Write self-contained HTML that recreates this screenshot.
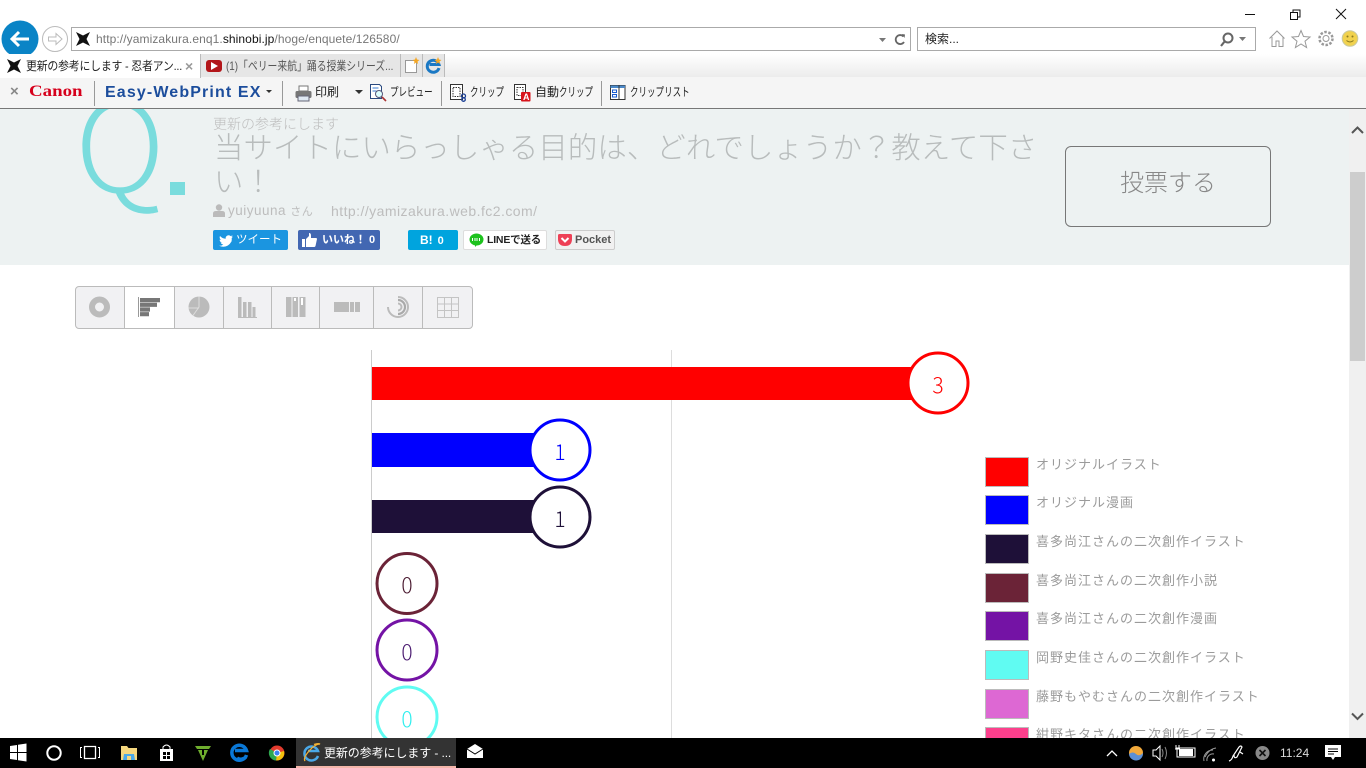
<!DOCTYPE html>
<html lang="ja"><head><meta charset="utf-8"><title>更新の参考にします</title>
<style>
html,body{margin:0;padding:0;width:1366px;height:768px;overflow:hidden;background:#fff}
body{position:relative;font-family:"Liberation Sans","Noto Sans CJK JP",sans-serif;}
.a{position:absolute;white-space:nowrap;margin:0;padding:0}
svg{position:absolute;overflow:visible}
.tb{font-size:12px;color:#222;line-height:16px;top:84px;transform-origin:left center}
.nr{transform:scaleX(.71)}
.dv{position:absolute;top:81px;width:1px;height:25px;background:#999}
.sw{position:absolute;left:985px;width:42px;height:28px;border:1px solid #bbb}
.lg{position:absolute;left:1036px;font-size:13px;letter-spacing:1px;line-height:16px;color:#9b9b9b;white-space:nowrap}
.cell{position:absolute;top:287px;height:41px;border-right:1px solid #bbb}
.num{position:absolute;width:60px;text-align:center;font-family:"Noto Sans CJK JP",sans-serif;font-size:21px;line-height:24px;font-weight:300}
.sh{position:absolute;top:230px;height:20px;border-radius:2px;font-size:11px;font-weight:bold;line-height:20px;white-space:nowrap;box-sizing:border-box}
</style></head><body>

<!-- chrome -->
<div class="a" style="left:0;top:54px;width:1366px;height:23px;background:linear-gradient(#fff,#ececec)"></div>
<div class="a" style="left:0;top:77px;width:1366px;height:31px;background:#f5f5f5"></div>
<div class="a" style="left:0;top:108px;width:1366px;height:1px;background:#777"></div>

<!-- window buttons -->
<svg style="left:0;top:0" width="1366" height="54" fill="none">
<path d="M1245 14.500h10" stroke="#111"/>
<path d="M1290.500 12.500h7v7h-7zM1293 12.500v-2.500h7v7h-2.500" stroke="#111"/>
<path d="M1336 9l10 10M1346 9l-10 10" stroke="#111"/>
<circle cx="20" cy="39" r="18.500" fill="#0a84c6"/>
<path d="M29 39H12M19 32l-7 7 7 7" stroke="#fff" stroke-width="3"/>
<circle cx="55" cy="39" r="12.500" fill="#fff" stroke="#bbb"/>
<path d="M48.500 37h7.500v-3.500l6 5.500-6 5.500V41h-7.500z" stroke="#bbb"/>
</svg>

<div class="a" style="left:71px;top:27px;width:838px;height:22px;border:1px solid #aaa;background:#fff"></div>
<svg style="left:76px;top:32px" width="15" height="15"><path d="M0 0L7 3.500 14 0 10.500 7 14 14 7 10.500 0 14 3.500 7Z" fill="#111"/></svg>
<div class="a" style="left:96px;top:31px;font-size:12px;line-height:16px;color:#777;letter-spacing:.09px">http://yamizakura.enq1.<span style="color:#111">shinobi.jp</span>/hoge/enquete/126580/</div>
<svg style="left:878px;top:33px" width="30" height="14" fill="none"><path d="M1 5h7l-3.500 4z" fill="#777"/><path d="M25.500 3.500A4.500 4.500 0 1 0 26 9" stroke="#666" stroke-width="1.800"/><path d="M24 1l3 .5-.5 3.500z" fill="#666"/></svg>

<div class="a" style="left:917px;top:27px;width:337px;height:22px;border:1px solid #aaa;background:#fff"></div>
<div class="a" style="left:925px;top:31px;font-size:12px;line-height:16px;color:#222">検索...</div>
<svg style="left:1219px;top:31px" width="30" height="16" fill="none"><circle cx="9" cy="7" r="4.500" stroke="#666" stroke-width="2"/><path d="M6 10l-4 5" stroke="#666" stroke-width="2.200"/><path d="M20 6h7l-3.500 4z" fill="#777"/></svg>

<!-- right icons -->
<svg style="left:1268px;top:29px" width="92" height="20" fill="none" stroke="#999">
<path d="M1.500 9.500L9 2l7.500 7.500M4 8v9.500h4v-5.500h3v5.500h4V8"/>
<path d="M33 1.500l2.500 6 6.500.5-5 4.200 1.600 6.300-5.600-3.500-5.600 3.500 1.600-6.300-5-4.200 6.500-.5z"/>
<circle cx="58" cy="9.500" r="3"/><circle cx="58" cy="9.500" r="6.500" stroke-width="2.500" stroke-dasharray="2.500 1.600"/>
<circle cx="82" cy="9.500" r="7.800" fill="#f1d24e" stroke="#c9c9a0"/>
<circle cx="79.500" cy="7.500" r="1" fill="#8a7a20" stroke="none"/><circle cx="84.500" cy="7.500" r="1" fill="#8a7a20" stroke="none"/>
<path d="M78.500 11.500q3.500 3 7 0" stroke="#8a7a20"/>
</svg>

<!-- tabs -->
<div class="a" style="left:0;top:54px;width:200px;height:24px;background:#fff;border-right:1px solid #bbb"></div>
<svg style="left:7px;top:59px" width="15" height="15"><path d="M0 0L7 3.500 14 0 10.500 7 14 14 7 10.500 0 14 3.500 7Z" fill="#111"/></svg>
<div class="a" style="left:26px;top:58px;font-size:12px;line-height:16px;color:#222;letter-spacing:-.25px;transform:scaleX(.91);transform-origin:left center">更新の参考にします - 忍者アン...</div>
<div class="a" style="left:185px;top:57px;font-size:14px;line-height:18px;color:#999;font-weight:bold">×</div>
<div class="a" style="left:201px;top:54px;width:199px;height:23px;background:#e6e6e6;border-right:1px solid #bbb"></div>
<div class="a" style="left:206px;top:60px;width:16px;height:12px;background:#b3161a;border-radius:3px"></div>
<svg style="left:211px;top:62px" width="8" height="8"><path d="M0 0l7 4-7 4z" fill="#fff"/></svg>
<div class="a" style="left:226px;top:58px;font-size:12px;line-height:16px;color:#555;transform:scaleX(.82);transform-origin:left center">(1)「ペリー来航」踊る授業シリーズ...</div>
<div class="a" style="left:401px;top:54px;width:21px;height:23px;background:#e6e6e6;border-right:1px solid #bbb"></div>
<svg style="left:405px;top:57px" width="15" height="17"><path d="M.5 3.500h9l2 2v10h-11z" fill="#fff" stroke="#999"/><path d="M11 0l1 2.500 2.500.5-2 1.500.5 2.500-2-1.500-2 1.500.5-2.500-2-1.500 2.500-.5z" fill="#f4a623"/></svg>
<div class="a" style="left:423px;top:54px;width:21px;height:23px;background:#e6e6e6;border-right:1px solid #bbb"></div>
<svg style="left:425px;top:57px" width="17" height="17" fill="none"><path d="M14 11a6 6 0 1 1 0-3.500H4.500" stroke="#1a78c4" stroke-width="3"/><path d="M13 0l1 2.500 2.500.5-2 1.500.5 2.500-2-1.500-2 1.500.5-2.500-2-1.500 2.500-.5z" fill="#f4a623"/></svg>

<!-- toolbar -->
<div class="a" style="left:10px;top:84px;font-size:15px;line-height:16px;color:#888;font-weight:bold">×</div>
<div class="a" style="left:29px;top:84px;font-family:'Liberation Serif',serif;font-size:16px;line-height:16px;font-weight:bold;color:#d6001c;transform:scaleX(1.18);transform-origin:left center">Canon</div>
<div class="dv" style="left:94px"></div>
<div class="a" style="left:105px;top:84px;font-size:16px;line-height:18px;font-weight:bold;color:#1c4d9c;letter-spacing:1.130px">Easy-WebPrint EX</div>
<svg style="left:266px;top:90px" width="6" height="4"><path d="M0 0h6L3 3z" fill="#333"/></svg>
<div class="dv" style="left:282px"></div>
<svg style="left:295px;top:85px" width="17" height="17"><path d="M4 1h9v5H4z" fill="#fff" stroke="#777"/><rect x=".5" y="6" width="16" height="7" rx="1.500" fill="#777"/><path d="M3 11h11v5H3z" fill="#dfe8f2" stroke="#667"/></svg>
<div class="a tb" style="left:315px">印刷</div>
<svg style="left:355px;top:90px" width="9" height="5"><path d="M0 0h8L4 4z" fill="#333"/></svg>
<svg style="left:370px;top:84px" width="17" height="18" fill="none"><path d="M.5 .5h9l2 2v12h-11z" fill="#fff" stroke="#2a4a80"/><path d="M2.500 4h6M2.500 7h4" stroke="#3a7bd0"/><circle cx="9" cy="10" r="3.500" fill="#dff" stroke="#557"/><path d="M12 13l4 4" stroke="#a33" stroke-width="1.600"/></svg>
<div class="a tb nr" style="left:390px">プレビュー</div>
<div class="dv" style="left:441px"></div>
<svg style="left:450px;top:84px" width="17" height="17" fill="none"><path d="M.5 .5h12v15H.5z" fill="#fff" stroke="#333"/><path d="M3 3.500h7v9H3z" stroke="#333" stroke-dasharray="1.500 1"/><circle cx="13.500" cy="12" r="2" stroke="#1c3f94" stroke-width="1.300"/><circle cx="13.500" cy="15.500" r="1.800" stroke="#1c3f94" stroke-width="1.300"/></svg>
<div class="a tb nr" style="left:470px">クリップ</div>
<svg style="left:514px;top:84px" width="17" height="18" fill="none"><path d="M.5 .5h11v15H.5z" fill="#fff" stroke="#333"/><path d="M3 3.500h6v8H3z" stroke="#333" stroke-dasharray="1.500 1"/><rect x="7" y="8" width="9.500" height="9.500" rx="1" fill="#d8141c"/><text x="9" y="16" font-size="9" font-weight="bold" fill="#fff" font-family="Liberation Sans">A</text></svg>
<div class="a tb" style="left:535px">自動</div>
<div class="a tb nr" style="left:559px">クリップ</div>
<div class="dv" style="left:601px"></div>
<svg style="left:610px;top:85px" width="16" height="15" fill="none"><path d="M.5 .5h14.500v14H.5z" fill="#fff" stroke="#333"/><path d="M.5 .5h14.500v2.500H.5z" fill="#4a88c8"/><path d="M9 .5v14" stroke="#333"/><path d="M2.500 5h4v2.500h-4zM2.500 9.500h4V12h-4z" stroke="#1a5bd0"/></svg>
<div class="a tb nr" style="left:630px">クリップリスト</div>

<!-- header panel -->
<div class="a" style="left:0;top:109px;width:1349px;height:156px;background:#edf2f2;overflow:hidden">
  <div class="a" style="left:75px;top:-61px;font-family:'Noto Sans CJK JP',sans-serif;font-weight:300;font-size:124px;line-height:180px;color:#7adcdd">Q</div>
  <div class="a" style="left:170px;top:73px;width:15px;height:13px;background:#7adcdd"></div>
  <div class="a" style="left:213px;top:6px;font-size:14px;line-height:18px;color:#bdbdbd;font-weight:300">更新の参考にします</div>
  <div class="a" style="left:214px;top:23px;width:832px;white-space:normal;font-size:29.400px;letter-spacing:.1px;line-height:34px;color:#b8bcbc;font-weight:300">当サイトにいらっしゃる目的は、どれでしょうか？教えて下さい！</div>
  <svg style="left:213px;top:95px" width="12" height="13"><circle cx="6" cy="3.500" r="3.200" fill="#bbb"/><path d="M0 13V9.500Q0 7 3 7h6q3 0 3 2.500V13z" fill="#bbb"/></svg>
  <div class="a" style="left:228px;top:94px;font-size:13.500px;line-height:16px;color:#bdbdbd;letter-spacing:.5px">yuiyuuna <span style="font-size:11px">さん</span></div>
  <div class="a" style="left:331px;top:94px;font-size:14px;line-height:16px;color:#bdbdbd;letter-spacing:.45px">http://yamizakura.web.fc2.com/</div>
  <div class="a" style="left:1065px;top:37px;width:204px;height:79px;border:1px solid #777;border-radius:6px"></div>
  <div class="a" style="left:1065px;top:57px;width:206px;text-align:center;font-size:24px;line-height:36px;color:#888;font-weight:300">投票する</div>
</div>

<!-- share buttons -->
<div class="sh" style="left:213px;width:75px;background:#1b95e0;color:#fff;padding-left:23px;font-weight:normal;font-size:11.500px">ツイート</div>
<svg style="left:219px;top:235px" width="14" height="11"><path d="M14 1.500q-.8.400-1.700.5.900-.6 1.300-1.600-.9.500-1.900.7a3 3 0 0 0-5 2.700Q3.200 3.600 1 1q-1 2 .9 4-.7 0-1.300-.4 0 2.200 2.300 2.900-.7.200-1.300 0 .6 1.800 2.700 2Q2.500 11 0 10.700 8 14 12.500 6.500 13 4 12.600 3q.800-.6 1.400-1.500z" fill="#fff"/></svg>
<div class="sh" style="left:298px;width:82px;background:#4267b2;color:#fff;padding-left:24px">いいね！ 0</div>
<svg style="left:302px;top:233px" width="15" height="14"><path d="M0 6h3v8H0zM4 6l3-3V0q2 0 2 2.500V5h5q1 0 1 1l-1.500 7q-.3 1-1.300 1H4z" fill="#fff"/></svg>
<div class="sh" style="left:408px;width:50px;background:#00a4de;color:#fff;padding-left:12px;font-size:12px">B!<span style="margin-left:5px;font-size:11px">0</span></div>
<div class="sh" style="left:463px;width:84px;background:#fff;border:1px solid #ddd;color:#222;padding-left:23px;line-height:18px;font-size:10.500px;letter-spacing:-.2px">LINEで送る</div>
<svg style="left:469px;top:233px" width="15" height="14"><ellipse cx="7.500" cy="6.500" rx="7" ry="6" fill="#1dc21d"/><path d="M6 11h3l-3 3z" fill="#1dc21d"/><path d="M3.500 5v3M6 5v3M8 5v3M10.500 5v3" stroke="#fff"/></svg>
<div class="sh" style="left:555px;width:60px;background:#f1f1f1;border:1px solid #ccc;color:#555;padding-left:19px;line-height:18px">Pocket</div>
<svg style="left:558px;top:234px" width="14" height="12"><path d="M1.500 0h11Q14 0 14 1.500V5Q14 12 7 12 0 12 0 5V1.500Q0 0 1.500 0z" fill="#ee4056"/><path d="M3.500 4L7 7.500 10.500 4" stroke="#fff" stroke-width="2" fill="none"/></svg>

<!-- chart type tabs -->
<div class="a" style="left:75px;top:286px;width:396px;height:41px;border:1px solid #bbb;border-radius:4px;background:#f1f1f3"></div>
<div class="a" style="left:125px;top:287px;width:49px;height:41px;background:#fff"></div>
<div class="cell" style="left:124px"></div><div class="cell" style="left:174px"></div><div class="cell" style="left:223px"></div><div class="cell" style="left:271px"></div><div class="cell" style="left:319px"></div><div class="cell" style="left:373px"></div><div class="cell" style="left:422px"></div>
<svg style="left:75px;top:286px" width="398" height="43" fill="none">
<circle cx="24.500" cy="21" r="7.500" stroke="#bbb" stroke-width="6"/>
<path d="M63.500 11v20" stroke="#999"/><path d="M65 12h20v4.200H65zM65 16.700h17v4.200H65zM65 21.400h10v4.200H65zM65 26.100h9v4.200H65z" fill="#777"/>
<circle cx="124" cy="21" r="10.500" fill="#bbb"/><path d="M124 10.500V21l-6 8.500M113.500 22H124" stroke="#ddd"/>
<path d="M163 11h3.500v20H163zM168 16h3.500v15H168zM173 16h3.500v15H173zM177.500 21h3v10h-3z" fill="#bbb"/><path d="M163 31.500h19" stroke="#bbb"/>
<path d="M211 11h5.500v20H211zM217.500 11h5.500v20h-5.500zM224.500 11h6v20h-6z" fill="#bbb"/><path d="M219 12h2v3h-2zM226 12h2v7h-2z" fill="#fff"/>
<path d="M259 16h15v10h-15zM275 16h4v10h-4zM280 16h5v10h-5z" fill="#bbb"/>
<path d="M323 11a10 10 0 1 1-10 10" stroke="#bbb" stroke-width="2"/><path d="M323 14a7 7 0 0 1 0 14" stroke="#aaa" stroke-width="2.200"/><path d="M323 17.500a3.500 3.500 0 0 1 0 7" stroke="#bbb" stroke-width="2"/>
<path d="M362.500 11.500h21v20h-21zM362.500 18h21M362.500 24.500h21M369.500 11.500v20M376.500 11.500v20" stroke="#c4c4c4"/>
</svg>

<!-- chart -->
<div class="a" style="left:371px;top:350px;width:1px;height:388px;background:#ccc"></div>
<div class="a" style="left:671px;top:350px;width:1px;height:388px;background:#ddd"></div>
<div class="a" style="left:372px;top:367px;width:560px;height:33px;background:#f00"></div>
<div class="a" style="left:372px;top:433px;width:180px;height:34px;background:#00f"></div>
<div class="a" style="left:372px;top:500px;width:180px;height:33px;background:#1e1038"></div>
<svg style="left:0;top:0" width="1366" height="738" fill="#fff" stroke-width="3">
<circle cx="938" cy="383" r="30" stroke="#f00"/>
<circle cx="560" cy="450" r="30" stroke="#00f"/>
<circle cx="560" cy="517" r="30" stroke="#1e1038"/>
<circle cx="407" cy="583.500" r="30" stroke="#6b2337"/>
<circle cx="407" cy="650" r="30" stroke="#7413a5"/>
<circle cx="407" cy="717" r="30" stroke="#60fbf2"/>
</svg>
<div class="num" style="left:908px;top:373px;color:#f00">3</div>
<div class="num" style="left:530px;top:440px;color:#00f">1</div>
<div class="num" style="left:530px;top:507px;color:#1e1038">1</div>
<div class="num" style="left:377px;top:573px;color:#4a1a30">0</div>
<div class="num" style="left:377px;top:640px;color:#4a1a70">0</div>
<div class="num" style="left:377px;top:707px;color:#30eeee">0</div>

<!-- legend -->
<div class="sw" style="top:457px;background:#f00"></div><div class="lg" style="top:457px">オリジナルイラスト</div>
<div class="sw" style="top:495px;background:#00f"></div><div class="lg" style="top:495px">オリジナル漫画</div>
<div class="sw" style="top:534px;background:#1e1038"></div><div class="lg" style="top:534px">喜多尚江さんの二次創作イラスト</div>
<div class="sw" style="top:573px;background:#6b2337"></div><div class="lg" style="top:573px">喜多尚江さんの二次創作小説</div>
<div class="sw" style="top:611px;background:#7413a5"></div><div class="lg" style="top:611px">喜多尚江さんの二次創作漫画</div>
<div class="sw" style="top:650px;background:#60fbf2"></div><div class="lg" style="top:650px">岡野史佳さんの二次創作イラスト</div>
<div class="sw" style="top:689px;background:#dd68d3"></div><div class="lg" style="top:689px">藤野もやむさんの二次創作イラスト</div>
<div class="sw" style="top:727px;background:#fb3f8c"></div><div class="lg" style="top:727px">紺野キタさんの二次創作イラスト</div>

<!-- scrollbar -->
<div class="a" style="left:1349px;top:109px;width:17px;height:629px;background:#f0f0f0"></div>
<div class="a" style="left:1350px;top:172px;width:15px;height:189px;background:#cdcdcd"></div>
<svg style="left:1351px;top:126px" width="13" height="9" fill="none"><path d="M1 7l5.500-5.500L12 7" stroke="#555" stroke-width="2"/></svg>
<svg style="left:1351px;top:712px" width="13" height="9" fill="none"><path d="M1 1.500L6.500 7 12 1.500" stroke="#555" stroke-width="2"/></svg>

<!-- taskbar -->
<div class="a" style="left:0;top:738px;width:1366px;height:30px;background:#000"></div>
<div class="a" style="left:296px;top:738px;width:160px;height:28px;background:#333"></div>
<div class="a" style="left:296px;top:766px;width:160px;height:2px;background:#f3b5a9"></div>
<svg style="left:0;top:738px" width="1366" height="30" fill="none">
<path d="M10 8l7-1v7h-7zM18 6.800l8.500-1.300V14H18zM10 15h7v7l-7-1zM18 15h8.500v8.500L18 22.200z" fill="#fff"/>
<circle cx="54" cy="15" r="6.700" stroke="#fff" stroke-width="2"/>
<path d="M84.500 8.500h11v12h-11z" stroke="#fff" stroke-width="1.300"/><path d="M82 9.500h-1.500v10H82M98 9.500h1.500v10H98" stroke="#fff"/>
<path d="M121 8h6l1.500 2h8.500v12h-16z" fill="#f5d77f"/><path d="M124 16h10l1 6h-12z" fill="#4aa8e8"/><path d="M127 18h4v4h-4z" fill="#f5d77f"/>
<path d="M160 11h13v12h-13z" fill="#fff"/><path d="M163 11v-2q3.500-4 7 0v2" stroke="#fff"/><path d="M163 14h3v3h-3zM167 14h3v3h-3zM163 18h3v3h-3zM167 18h3v3h-3z" fill="#000"/>
<path d="M195 8h16l-2 3h-12z" fill="#6fae2e"/><path d="M198 12h10l-5 11z" fill="#6fae2e"/><path d="M202 12h2v5h-2z" fill="#000"/>
<path d="M246.500 17a7.500 7.500 0 1 1 0-4.500H235M246 19q-5 4-9 1" stroke="#0a78d7" stroke-width="3.500"/>
<circle cx="277" cy="15" r="7.500" fill="#e33b2e"/><path d="M277 15L284 13a7.500 7.500 0 0 1-8 9.500z" fill="#f4c20d"/><path d="M277 15l-1 7.500A7.500 7.500 0 0 1 270 11z" fill="#2fa84f"/><circle cx="277" cy="15" r="3" fill="#3c82f0" stroke="#fff"/>
<path d="M318 18a7 7 0 1 1 0-5H308" stroke="#4aa8e8" stroke-width="2.500"/><path d="M305 23q-2-3 4-10t11-7q-2-1-6 .5" stroke="#f2b133" stroke-width="1.300"/>
<path d="M467 11l8-5 8 5v9h-16z" fill="#fff"/><path d="M467 11l8 5 8-5" stroke="#000"/>
<path d="M1107 18l5-5 5 5" stroke="#fff" stroke-width="1.300"/>
<circle cx="1136" cy="15" r="7" fill="#f2a93b"/><path d="M1129 16q4-3 7 0t7-1a7 7 0 0 1-14 1z" fill="#5c8fd4"/>
<path d="M1153 12h3l4-4v14l-4-4h-3z" stroke="#fff"/><path d="M1162 11q2 4 0 8M1165 9q3 6 0 12" stroke="#888"/>
<path d="M1179 11h14v7h-14z" fill="#fff"/><path d="M1177 10h18v9h-18z" stroke="#fff"/><path d="M1176 7v4M1179 7v4M1175 11h5" stroke="#fff"/>
<path d="M1204 23a9 9 0 0 1 9-11M1207 23a6 6 0 0 1 7-7M1205 19q4-8 11-9" stroke="#999"/><circle cx="1213.500" cy="22" r="1.500" fill="#fff"/>
<path d="M1229 23q3-1 4-5l6-9q2-2 3 0l-5 10q-3 2-3-2M1240 14l3 2" stroke="#fff" stroke-width="1.200"/>
<circle cx="1262.500" cy="15" r="7" fill="#888"/><path d="M1259.500 12l6 6M1265.500 12l-6 6" stroke="#111" stroke-width="1.600"/>
<path d="M1325 7h16v12h-6l-2 3-2-3h-6z" fill="#fff"/><path d="M1328 11h10M1328 13.500h10M1328 16h6" stroke="#000"/>
</svg>
<div class="a" style="left:324px;top:745px;font-size:12px;line-height:16px;color:#fff;letter-spacing:-.1px">更新の参考にします - ...</div>
<div class="a" style="left:1280px;top:745px;font-size:12px;line-height:16px;color:#ddd">11:24</div>
</body></html>
